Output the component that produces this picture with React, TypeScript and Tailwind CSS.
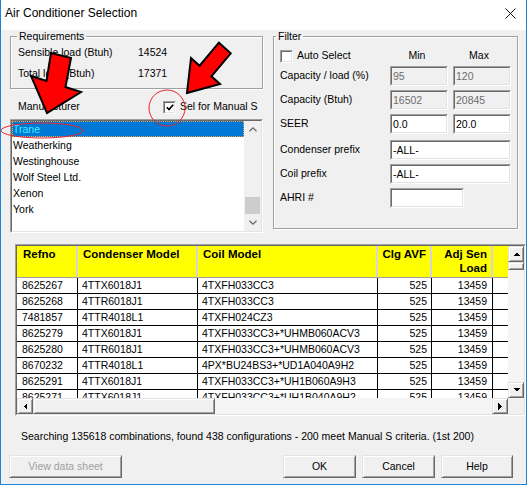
import type { ReactNode } from "react";

// Air Conditioner Selection dialog — classic Win32 look: etched group boxes,
// sunken edits, a yellow-headed result grid and raised 3D scroll buttons.

type Row = [string, string, string, string, string];

const makers = ["Trane", "Weatherking", "Westinghouse", "Wolf Steel Ltd.", "Xenon", "York"];

const rows: Row[] = [
  ["8625267", "4TTX6018J1", "4TXFH033CC3", "525", "13459"],
  ["8625268", "4TTR6018J1", "4TXFH033CC3", "525", "13459"],
  ["7481857", "4TTR4018L1", "4TXFH024CZ3", "525", "13459"],
  ["8625279", "4TTX6018J1", "4TXFH033CC3+*UHMB060ACV3", "525", "13459"],
  ["8625280", "4TTR6018J1", "4TXFH033CC3+*UHMB060ACV3", "525", "13459"],
  ["8670232", "4TTR4018L1", "4PX*BU24BS3+*UD1A040A9H2", "525", "13459"],
  ["8625291", "4TTX6018J1", "4TXFH033CC3+*UH1B060A9H3", "525", "13459"],
  ["8625271", "4TTX6018J1", "4TXFH033CC3+*UH1B040A9H2", "525", "13459"],
];

const cols = "grid grid-cols-[61px_120px_180px_54px_61px_15px]";

function Sunken({ className = "", inner = "", children }: { className?: string; inner?: string; children?: ReactNode }) {
  return (
    <div className={`border border-t-[#a0a0a0] border-l-[#a0a0a0] border-b-white border-r-white ${className}`}>
      <div
        className={`h-full w-full border border-t-[#696969] border-l-[#696969] border-b-[#e3e3e3] border-r-[#e3e3e3] ${inner}`}
      >
        {children}
      </div>
    </div>
  );
}

function Raised({ className = "", children }: { className?: string; children?: ReactNode }) {
  return (
    <div
      className={`border border-t-[#e3e3e3] border-l-[#e3e3e3] border-b-[#696969] border-r-[#696969] bg-[#f0f0f0] shadow-[inset_1px_1px_0_#fff,inset_-1px_-1px_0_#a0a0a0] ${className}`}
    >
      {children}
    </div>
  );
}

function Tri({ d }: { d: "up" | "down" | "left" | "right" }) {
  const vert = d === "up" || d === "down";
  const pts = {
    up: "0,4 7,4 3.5,0.5",
    down: "0,0 7,0 3.5,3.5",
    left: "4,0 4,7 0.5,3.5",
    right: "0,0 0,7 3.5,3.5",
  }[d];
  return (
    <svg width={vert ? 7 : 4} height={vert ? 4 : 7} shapeRendering="crispEdges">
      <polygon points={pts} fill="#000" />
    </svg>
  );
}

function Check({ on }: { on?: boolean }) {
  return (
    <Sunken className="h-[13px] w-[13px] shrink-0" inner="bg-white flex items-center justify-center">
      {on && (
        <svg width="8" height="7" viewBox="0 0 8 7">
          <polyline points="0.8,3.2 3,5.6 7.2,0.8" fill="none" stroke="#000" strokeWidth="1.7" />
        </svg>
      )}
    </Sunken>
  );
}

function Edit({ value, off, w }: { value?: string; off?: boolean; w: string }) {
  return (
    <Sunken
      className={`h-[20px] shrink-0 ${w}`}
      inner={`${off ? "bg-[#f0f0f0] text-[#6d6d6d]" : "bg-white"} pl-[1px] leading-[16px]`}
    >
      {value}
    </Sunken>
  );
}

function FilterRow({ label, className = "", children }: { label: string; className?: string; children: ReactNode }) {
  return (
    <div className={`flex h-[20px] items-center ${className}`}>
      <span className="w-[110px] shrink-0">{label}</span>
      <div className="flex gap-[5px]">{children}</div>
    </div>
  );
}

function Chevron({ down }: { down?: boolean }) {
  return (
    <svg width="8" height="5" viewBox="0 0 8 5">
      <polyline
        points={down ? "0.5,0.8 4,4.2 7.5,0.8" : "0.5,4.2 4,0.8 7.5,4.2"}
        fill="none"
        stroke="#606060"
        strokeWidth="1.2"
      />
    </svg>
  );
}

function Annotations() {
  return (
    <svg className="pointer-events-none absolute -left-px top-0" width="527" height="485">
      <polygon
        points="51,53 71,58 65.5,87 81,92 47,113 31,76 46.5,81"
        fill="#ff0000"
        stroke="#000"
        strokeWidth="2"
        strokeLinejoin="miter"
      />
      <polygon
        points="187,93 220,84 211.4,76.3 230.7,53.3 218.9,42.7 199.6,65.7 191,58"
        fill="#ff0000"
        stroke="#000"
        strokeWidth="2"
        strokeLinejoin="miter"
      />
      <circle cx="167" cy="108" r="18" fill="none" stroke="#e8262b" strokeWidth="1" />
      <ellipse cx="42" cy="130.5" rx="41" ry="7.5" fill="none" stroke="#e8262b" strokeWidth="1" />
    </svg>
  );
}

export default function App() {
  return (
    <div className="relative flex h-[485px] w-[527px] flex-col overflow-hidden border border-t-0 border-[#1883d7] bg-[#f0f0f0] font-['Liberation_Sans',Arial,sans-serif] text-[10.5px] text-black">
      {/* title bar */}
      <div className="flex h-[30px] shrink-0 items-start justify-between bg-white pl-[4px] pr-[10px]">
        <span className="pt-[5px] text-[12px] leading-[16px]">Air Conditioner Selection</span>
        <svg className="mt-[8px]" width="11" height="11" viewBox="0 0 11 11">
          <path d="M0.5 0.5 L10.5 10.5 M10.5 0.5 L0.5 10.5" stroke="#111" strokeWidth="1" />
        </svg>
      </div>

      {/* requirements / manufacturer / filter */}
      <div className="flex items-start">
        <div className="ml-[9px] w-[253px]">
          <fieldset className="h-[59px] border border-[#a0a0a0] shadow-[inset_1px_1px_0_#fff,1px_1px_0_#fff]">
            <legend className="ml-[6px] px-[2px] leading-[13px]">Requirements</legend>
            <div className="mt-[1px] flex pl-[7px] leading-[16px]">
              <span className="w-[120px]">Sensible load (Btuh)</span>
              <span>14524</span>
            </div>
            <div className="mt-[5px] flex pl-[7px] leading-[16px]">
              <span className="w-[120px]">Total load (Btuh)</span>
              <span>17371</span>
            </div>
          </fieldset>

          <div className="mt-[10px] flex h-[16px] items-center pl-[8px]">
            <span className="w-[145px] shrink-0">Manufacturer</span>
            <Check on />
            <span className="ml-[4px] whitespace-nowrap">Sel for Manual S</span>
          </div>

          <Sunken className="mt-[4px] h-[114px]" inner="flex bg-white">
            <div className="flex-1">
              {makers.map((m, i) => (
                <div
                  key={m}
                  className={`h-[16px] pl-[1px] leading-[16px] ${
                    i === 0 ? "bg-[#0078d7] text-[#3ef0ff] outline-1 -outline-offset-1 outline-dotted outline-[#f5a040]" : ""
                  }`}
                >
                  {m}
                </div>
              ))}
            </div>
            <div className="flex w-[17px] flex-col bg-[#f0f0f0]">
              <div className="flex h-[17px] items-center justify-center">
                <Chevron />
              </div>
              <div className="flex-1" />
              <div className="mx-[1px] h-[17px] bg-[#cdcdcd]" />
              <div className="flex h-[17px] items-center justify-center">
                <Chevron down />
              </div>
            </div>
          </Sunken>
        </div>

        <fieldset className="ml-[10px] h-[199px] w-[245px] border border-[#a0a0a0] shadow-[inset_1px_1px_0_#fff,1px_1px_0_#fff]">
          <legend className="ml-[2px] px-[2px] leading-[13px]">Filter</legend>
          <div className="pl-[6px]">
            <div className="mt-[4px] flex h-[18px] items-center">
              <div className="flex w-[110px] items-center">
                <Check />
                <span className="ml-[4px]">Auto Select</span>
              </div>
              <span className="w-[58px] pr-[4px] text-center">Min</span>
              <span className="ml-[5px] w-[58px] pr-[6px] text-center">Max</span>
            </div>
            <FilterRow label="Capacity / load (%)" className="mt-[1px]">
              <Edit value="95" off w="w-[58px]" />
              <Edit value="120" off w="w-[58px]" />
            </FilterRow>
            <FilterRow label="Capacity (Btuh)" className="mt-[4px]">
              <Edit value="16502" off w="w-[58px]" />
              <Edit value="20845" off w="w-[58px]" />
            </FilterRow>
            <FilterRow label="SEER" className="mt-[4px]">
              <Edit value="0.0" w="w-[58px]" />
              <Edit value="20.0" w="w-[58px]" />
            </FilterRow>
            <FilterRow label="Condenser prefix" className="mt-[6px]">
              <Edit value="-ALL-" w="w-[121px]" />
            </FilterRow>
            <FilterRow label="Coil prefix" className="mt-[4px]">
              <Edit value="-ALL-" w="w-[121px]" />
            </FilterRow>
            <FilterRow label="AHRI #" className="mt-[4px]">
              <Edit w="w-[74px]" />
            </FilterRow>
          </div>
        </fieldset>
      </div>

      {/* results grid */}
      <Sunken className="ml-[14px] mt-[11px] h-[172px] w-[511px]" inner="flex flex-col">
        <div className="flex h-[152px]">
          <div className="w-[491px] overflow-hidden">
            <div className={`${cols} h-[32px] border-b border-[#a0a0a0] text-[11.5px] font-bold leading-[14px]`}>
              <div className="border-r-2 border-[#d6d6d6] bg-[#ffff00] pl-[6px] pt-[1px]">Refno</div>
              <div className="border-r-2 border-[#d6d6d6] bg-[#ffff00] pl-[5px] pt-[1px]">Condenser Model</div>
              <div className="border-r-2 border-[#d6d6d6] bg-[#ffff00] pl-[5px] pt-[1px]">Coil Model</div>
              <div className="border-r-2 border-[#d6d6d6] bg-[#ffff00] pr-[4px] pt-[1px] text-right">Clg AVF</div>
              <div className="border-r-2 border-[#d6d6d6] bg-[#ffff00] pr-[4px] pt-[1px] text-right">
                Adj Sen
                <br />
                Load
              </div>
              <div className="bg-[#ffff00]" />
            </div>
            <div className="h-[120px] overflow-hidden bg-white">
              {rows.map((r) => (
                <div key={r[0] + r[2]} className={`${cols} h-[16px] border-b border-black leading-[15px]`}>
                  <div className="border-r border-black pl-[5px]">{r[0]}</div>
                  <div className="border-r border-black pl-[4px]">{r[1]}</div>
                  <div className="whitespace-nowrap border-r border-black pl-[4px]">{r[2]}</div>
                  <div className="border-r border-black pr-[4px] text-right">{r[3]}</div>
                  <div className="border-r border-black pr-[5px] text-right">{r[4]}</div>
                  <div />
                </div>
              ))}
            </div>
          </div>
          <div className="flex w-[16px] flex-col">
            <Raised className="flex h-[16px] items-center justify-center">
              <Tri d="up" />
            </Raised>
            <Raised className="h-[8px]" />
            <div className="flex-1 bg-[#f5f5f5]" />
            <Raised className="flex h-[16px] items-center justify-center">
              <Tri d="down" />
            </Raised>
          </div>
        </div>
        <div className="flex h-[16px]">
          <Raised className="flex w-[16px] items-center justify-center">
            <Tri d="left" />
          </Raised>
          <Raised className="w-[182px]" />
          <div className="flex-1 bg-[#f5f5f5]" />
          <Raised className="flex w-[16px] items-center justify-center">
            <Tri d="right" />
          </Raised>
          <div className="w-[16px] bg-[#f0f0f0]" />
        </div>
      </Sunken>

      <div className="mt-[12px] pl-[20px] leading-[16px]">
        Searching 135618 combinations, found 438 configurations - 200 meet Manual S criteria. (1st 200)
      </div>

      <div className="mt-[11px] flex h-[23px] justify-between pl-[8px] pr-[13px]">
        <Raised className="flex w-[113px] items-center justify-center text-[#a0a0a0]">View data sheet</Raised>
        <div className="flex gap-[6px]">
          <Raised className="flex w-[73px] items-center justify-center">OK</Raised>
          <Raised className="flex w-[73px] items-center justify-center">Cancel</Raised>
          <Raised className="flex w-[72px] items-center justify-center">Help</Raised>
        </div>
      </div>

      <Annotations />
    </div>
  );
}
